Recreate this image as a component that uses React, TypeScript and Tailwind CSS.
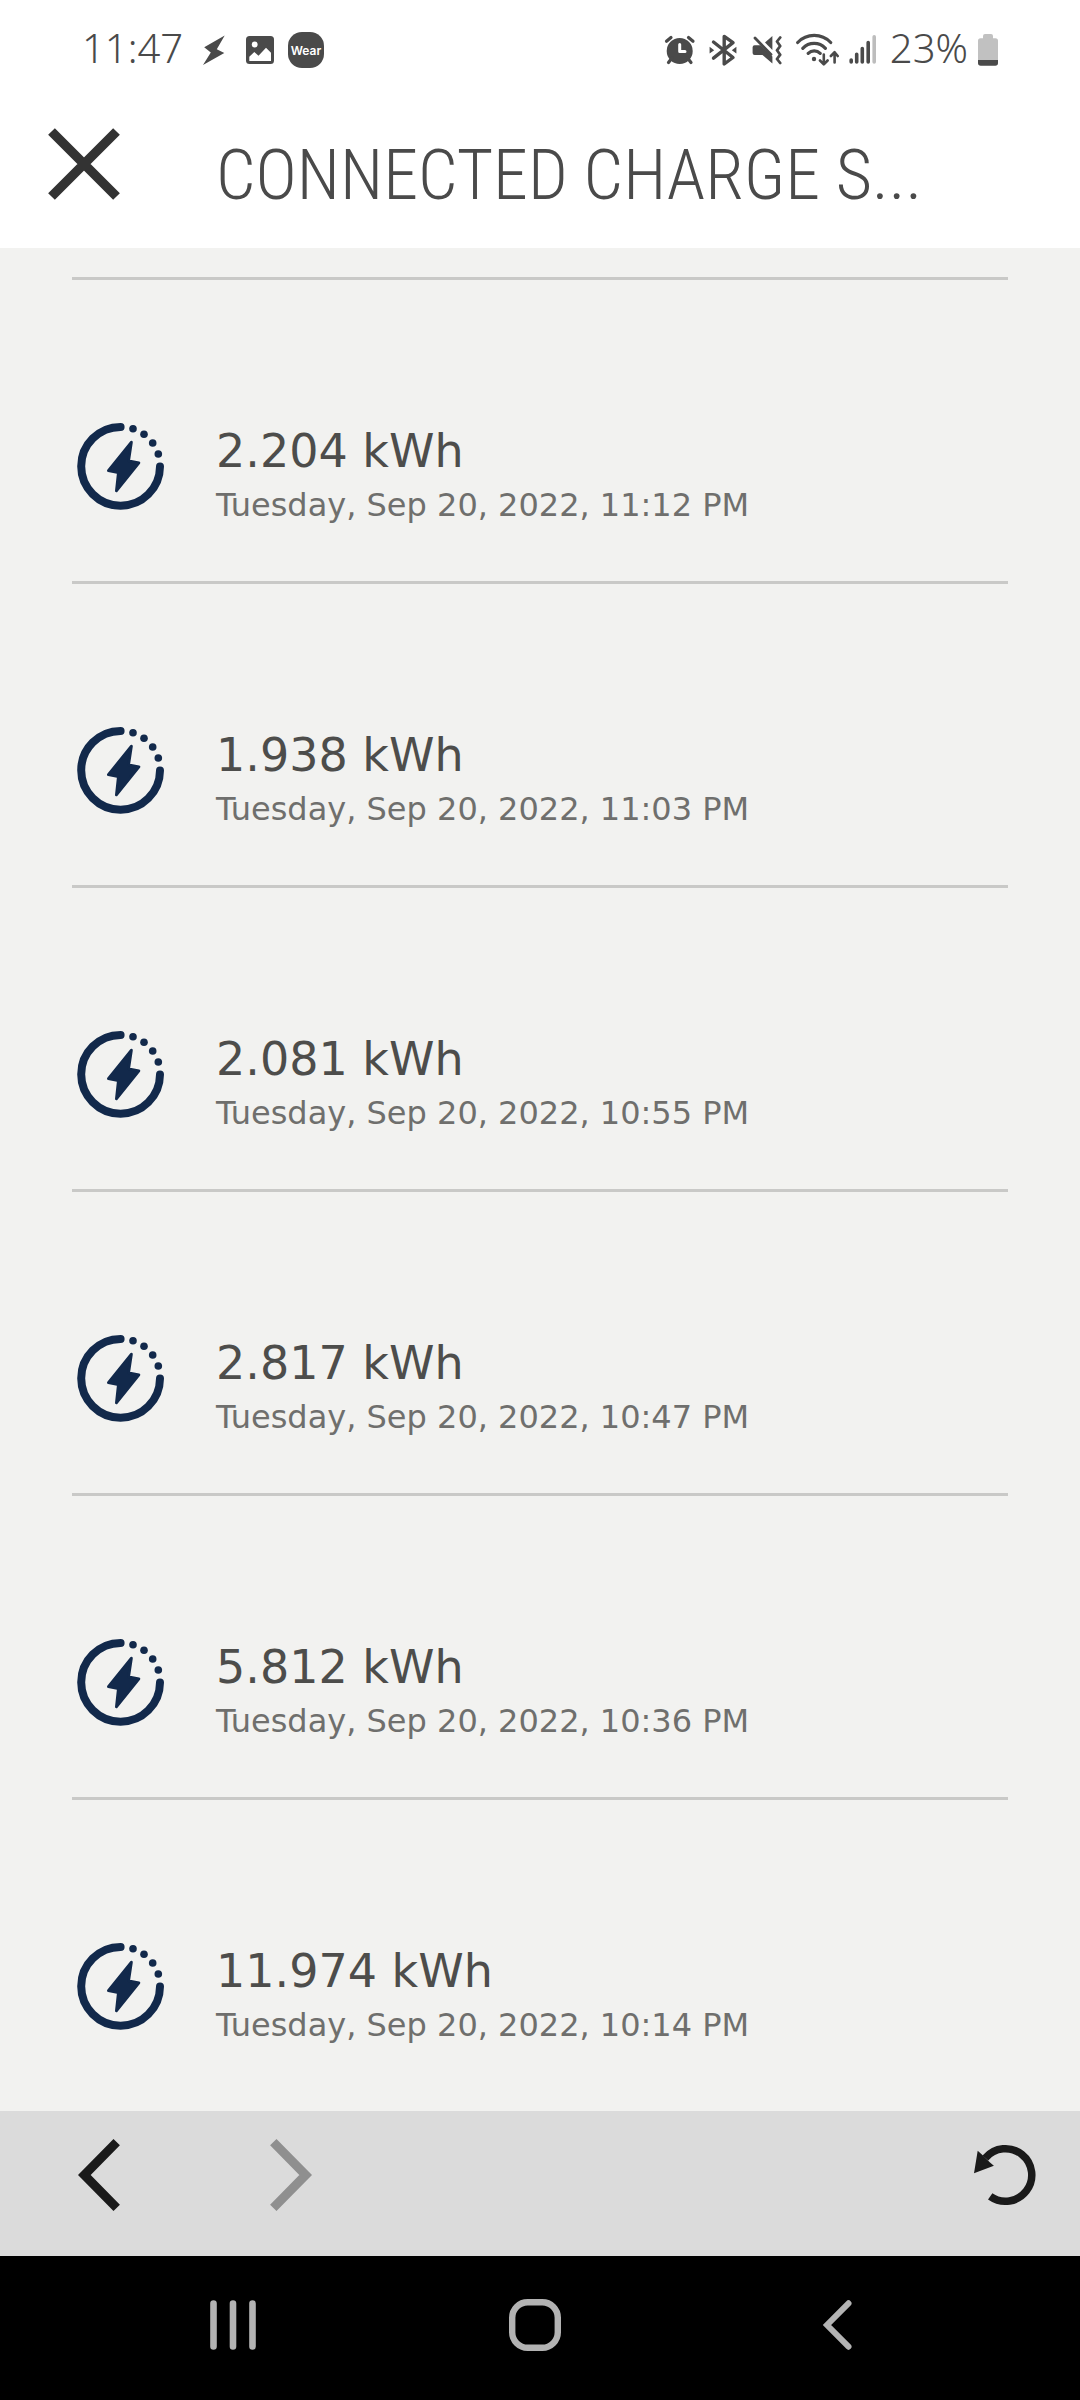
import React from 'react'

interface ChargeSession {
  energy: string
  date: string
  iso: string
}

const SESSIONS: ChargeSession[] = [
  { energy: '2.204 kWh', date: 'Tuesday, Sep 20, 2022, 11:12 PM', iso: '2022-09-20T23:12' },
  { energy: '1.938 kWh', date: 'Tuesday, Sep 20, 2022, 11:03 PM', iso: '2022-09-20T23:03' },
  { energy: '2.081 kWh', date: 'Tuesday, Sep 20, 2022, 10:55 PM', iso: '2022-09-20T22:55' },
  { energy: '2.817 kWh', date: 'Tuesday, Sep 20, 2022, 10:47 PM', iso: '2022-09-20T22:47' },
  { energy: '5.812 kWh', date: 'Tuesday, Sep 20, 2022, 10:36 PM', iso: '2022-09-20T22:36' },
  { energy: '11.974 kWh', date: 'Tuesday, Sep 20, 2022, 10:14 PM', iso: '2022-09-20T22:14' },
]

export default function App() {
  return (
    <div className="flex min-h-screen flex-col bg-[#f2f2f0]">
      <StatusBar />
      <Header />
      <main className="flex-1 px-[72px] pt-[29px]">
        <ul className="border-t-[3px] border-[#c9c9c7]">
          {SESSIONS.map((session) => (
            <SessionRow key={session.iso} session={session} />
          ))}
        </ul>
      </main>
      <BrowserBar />
      <SystemNav />
    </div>
  )
}

function Header() {
  return (
    <header className="flex items-start gap-24 bg-white px-12 pt-8 pb-[26px]">
      <button type="button" aria-label="Close" className="shrink-0">
        <svg className="h-[72px] w-[72px]" viewBox="0 0 72 72" stroke="#333333" strokeWidth="9.5">
          <path d="M3.5 3.5 68.5 68.5M68.5 3.5 3.5 68.5" />
        </svg>
      </button>
      <h1 className="min-w-0 font-['Roboto_Condensed',sans-serif] text-[70px] leading-[94px] font-[350] whitespace-nowrap text-[#4a4a4a]">
        CONNECTED CHARGE S...
      </h1>
    </header>
  )
}

function SessionRow({ session }: { session: ChargeSession }) {
  return (
    <li className="flex items-start gap-[52px] border-b-[3px] border-[#c9c9c7] pt-[142px] pb-[51px] pl-1 last:border-b-0">
      <ChargeIcon />
      <div className="min-w-0 font-['DejaVu_Sans',sans-serif]">
        <p className="text-[46px] leading-[58px] text-[#4d4d4b]">{session.energy}</p>
        <time dateTime={session.iso} className="block text-[32px] leading-[50px] text-[#6f6f6d]">
          {session.date}
        </time>
      </div>
    </li>
  )
}

function ChargeIcon() {
  return (
    <svg className="h-[88px] w-[88px] shrink-0" viewBox="0 0 88 88" fill="#12294b" aria-hidden="true">
      <path
        d="M44.6 4.9A39.4 39.4 0 1 0 84 44.5"
        fill="none"
        stroke="#12294b"
        strokeWidth="8"
        strokeLinecap="round"
      />
      <circle cx="57" cy="6.7" r="3.8" />
      <circle cx="68" cy="12.3" r="3.8" />
      <circle cx="76.7" cy="21" r="3.8" />
      <circle cx="82.3" cy="32" r="3.8" />
      <path
        d="M55.4 20.2 32.4 48.6 42.4 50.6 40.4 68.8 62.9 40.8 52.6 38.8Z"
        stroke="#12294b"
        strokeWidth="2.8"
        strokeLinejoin="round"
      />
    </svg>
  )
}

function BrowserBar() {
  return (
    <div className="flex items-start bg-[#dbdbdb] pt-7 pr-11 pb-[45px] pl-[78px]">
      <button type="button" aria-label="Back">
        <svg className="h-[72px] w-[42px]" viewBox="0 0 42 72" fill="none" stroke="#1a1a1a" strokeWidth="9">
          <path d="M38.7 3.2 6.3 36 38.7 68.8" />
        </svg>
      </button>
      <button type="button" aria-label="Forward" disabled className="ml-[150px]">
        <svg className="h-[72px] w-[42px]" viewBox="0 0 42 72" fill="none" stroke="#8f8f8f" strokeWidth="9">
          <path d="M3.3 3.2 35.7 36 3.3 68.8" />
        </svg>
      </button>
      <button type="button" aria-label="Reload" className="ml-auto">
        <svg className="h-[72px] w-[64px]" viewBox="0 0 64 72" fill="none">
          <path d="M13.4 19A26.3 26.3 0 1 1 18.2 57.4" stroke="#1a1a1a" strokeWidth="7.5" />
          <path d="M2 34.2 5.7 11.7 11.5 17 18 23.6 21.9 26.7Z" fill="#1a1a1a" />
        </svg>
      </button>
    </div>
  )
}

// Android three-button navigation
function SystemNav() {
  return (
    <nav className="grid h-36 grid-cols-3 bg-black pr-[92px] pb-1.5 pl-[82px]">
      <button type="button" aria-label="Recent apps" className="flex items-center justify-center">
        <svg className="h-[52px] w-[52px]" viewBox="0 0 52 52" stroke="#b3b3b3" strokeWidth="6.6" strokeLinecap="round">
          <path d="M6.5 4.5V47.5M26 4.5V47.5M45.5 4.5V47.5" />
        </svg>
      </button>
      <button type="button" aria-label="Home" className="flex items-center justify-center">
        <svg className="h-[52px] w-[52px]" viewBox="0 0 52 52" fill="none" stroke="#b3b3b3" strokeWidth="6.4">
          <rect x="3.2" y="3.2" width="45.6" height="45.6" rx="15.5" />
        </svg>
      </button>
      <button type="button" aria-label="Go back" className="flex items-center justify-center">
        <svg
          className="h-[52px] w-[52px]"
          viewBox="0 0 52 52"
          fill="none"
          stroke="#b3b3b3"
          strokeWidth="6"
          strokeLinecap="round"
        >
          <path d="M37.5 4.3 16 26 37.5 47.7" />
        </svg>
      </button>
    </nav>
  )
}

function StatusBar() {
  return (
    <div className="flex h-24 items-center justify-between bg-white px-[82px] font-['Noto_Sans',sans-serif] text-[40px] leading-none font-[350] text-[#4a4a4a]">
      <div className="flex items-center gap-3.5">
        <span>11:47</span>
        <svg className="h-10 w-[35px]" viewBox="196 28 35 40" fill="currentColor">
          <path d="M223.7 35.5 203.2 47.3 209.8 52.5 202 65 223.3 53 215.8 49.3Z" />
        </svg>
        <svg className="h-10 w-7" viewBox="245 28 28 40" fill="currentColor">
          <rect x="245" y="36" width="28" height="28" rx="3.5" />
          <circle cx="253.7" cy="44.5" r="2.9" fill="white" />
          <path d="M248.3 61V56.7L253.3 52 257.5 55.7 265 47.8 270 52.8V61Z" fill="white" />
        </svg>
        <svg className="h-10 w-9" viewBox="287 28 36 40">
          <rect x="287" y="32" width="36" height="36" rx="14" fill="currentColor" />
          <text
            x="305"
            y="55"
            textAnchor="middle"
            fill="white"
            className="font-['Inter',sans-serif] text-[12px] font-semibold"
          >
            Wear
          </text>
        </svg>
      </div>
      <div className="flex items-center gap-2.5">
        <AlarmIcon />
        <BluetoothIcon />
        <VibrateIcon />
        <WifiIcon />
        <SignalIcon />
        <span>23%</span>
        <svg className="h-10 w-5" viewBox="978 28 20 40">
          <path d="M983 38.3V36a2 2 0 0 1 2-2H991a2 2 0 0 1 2 2V38.3H995.5a2.5 2.5 0 0 1 2.5 2.5V60H978V40.8a2.5 2.5 0 0 1 2.5-2.5Z" fill="#c1c1c1" />
          <path d="M978 60H998V63a2.7 2.7 0 0 1-2.7 2.7H980.7A2.7 2.7 0 0 1 978 63Z" fill="#4a4a4a" />
        </svg>
      </div>
    </div>
  )
}

function AlarmIcon() {
  return (
    <svg className="h-10 w-[35px]" viewBox="664 28 35 40" fill="none" stroke="currentColor" strokeWidth="3.2" strokeLinecap="round">
      <circle cx="680.7" cy="51" r="13" fill="currentColor" stroke="none" />
      <path d="M667.5 41.3 672 37.5M694 41.3 689.5 37.5M673 58 669.5 62.5M688.5 58 692 62.5" />
      <path d="M680.7 44.5V51.6H686" stroke="white" strokeWidth="3" strokeLinejoin="round" />
    </svg>
  )
}

function BluetoothIcon() {
  return (
    <svg className="h-10 w-[33px]" viewBox="709 28 33 40" fill="currentColor">
      <path
        d="M714.5 42 734 57.5 725.2 64V36.4L734 42.7 714.5 58.2"
        fill="none"
        stroke="currentColor"
        strokeWidth="3.4"
        strokeLinecap="round"
        strokeLinejoin="round"
      />
      <path d="M710.6 46.8V53.6L715.2 50.2ZM737.4 46.8V53.6L732.8 50.2Z" />
    </svg>
  )
}

// muted speaker with a vibration wave
function VibrateIcon() {
  return (
    <svg className="h-10 w-[35px]" viewBox="752 28 35 40" fill="currentColor">
      <path d="M755.6 45.3H761.5L773.4 56.5V63.5L763.5 55H755.6A2 2 0 0 1 753.6 53V47.3A2 2 0 0 1 755.6 45.3Z" />
      <path d="M773.4 36V50L766 42.5Z" />
      <path
        d="M756 38 772 54.5M781.2 37.5 778 41.5 781.2 46 778 50.3 781.2 54.7 778 59 781.2 63"
        fill="none"
        stroke="currentColor"
        strokeWidth="2.8"
        strokeLinecap="round"
        strokeLinejoin="round"
      />
    </svg>
  )
}

function WifiIcon() {
  return (
    <svg className="h-10 w-[43px]" viewBox="797 28 43 40" fill="none" stroke="currentColor" strokeWidth="3.2" strokeLinecap="round" strokeLinejoin="round">
      <path d="M798.7 42.5A22.8 22.8 0 0 1 831.7 42.5M803.8 48.3A15.6 15.6 0 0 1 826.4 48.3M809.2 53.3A8.6 8.6 0 0 1 821.2 53.3" />
      <circle cx="815" cy="59" r="2.2" fill="currentColor" stroke="none" />
      <path d="M824.8 54.5V64M821 60.5 824.8 64.3 828.6 60.5M835.6 62.5V52.5M831.9 56 835.6 52.2 838.7 56" strokeWidth="2.6" />
    </svg>
  )
}

function SignalIcon() {
  return (
    <svg className="h-10 w-[31px]" viewBox="850 28 31 40" fill="none" stroke="currentColor" strokeWidth="3.6" strokeLinecap="round">
      <path d="M852.2 60V62M857.7 54.3V62M863.3 48.5V62M869.2 42.5V62" />
      <path d="M875.2 36.8V62" stroke="#bdbdbd" />
    </svg>
  )
}
